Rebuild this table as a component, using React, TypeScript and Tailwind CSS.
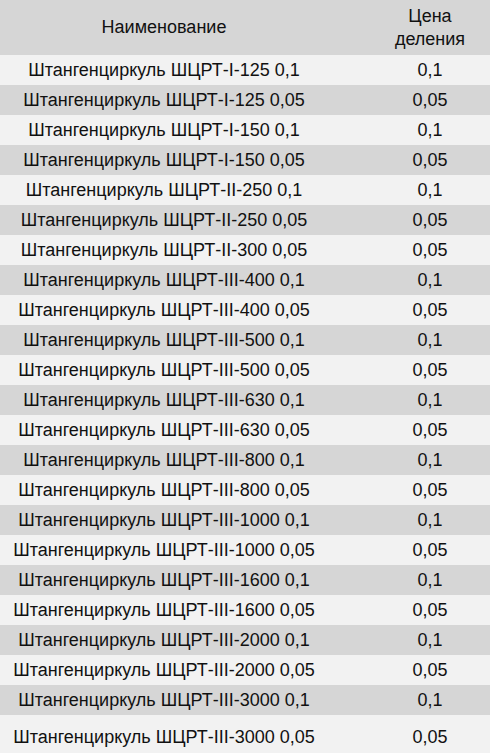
import React from "react";

const rows: [string, string][] = [
  ["Штангенциркуль ШЦРТ-I-125 0,1", "0,1"],
  ["Штангенциркуль ШЦРТ-I-125 0,05", "0,05"],
  ["Штангенциркуль ШЦРТ-I-150 0,1", "0,1"],
  ["Штангенциркуль ШЦРТ-I-150 0,05", "0,05"],
  ["Штангенциркуль ШЦРТ-II-250 0,1", "0,1"],
  ["Штангенциркуль ШЦРТ-II-250 0,05", "0,05"],
  ["Штангенциркуль ШЦРТ-II-300 0,05", "0,05"],
  ["Штангенциркуль ШЦРТ-III-400 0,1", "0,1"],
  ["Штангенциркуль ШЦРТ-III-400 0,05", "0,05"],
  ["Штангенциркуль ШЦРТ-III-500 0,1", "0,1"],
  ["Штангенциркуль ШЦРТ-III-500 0,05", "0,05"],
  ["Штангенциркуль ШЦРТ-III-630 0,1", "0,1"],
  ["Штангенциркуль ШЦРТ-III-630 0,05", "0,05"],
  ["Штангенциркуль ШЦРТ-III-800 0,1", "0,1"],
  ["Штангенциркуль ШЦРТ-III-800 0,05", "0,05"],
  ["Штангенциркуль ШЦРТ-III-1000 0,1", "0,1"],
  ["Штангенциркуль ШЦРТ-III-1000 0,05", "0,05"],
  ["Штангенциркуль ШЦРТ-III-1600 0,1", "0,1"],
  ["Штангенциркуль ШЦРТ-III-1600 0,05", "0,05"],
  ["Штангенциркуль ШЦРТ-III-2000 0,1", "0,1"],
  ["Штангенциркуль ШЦРТ-III-2000 0,05", "0,05"],
  ["Штангенциркуль ШЦРТ-III-3000 0,1", "0,1"],
  ["Штангенциркуль ШЦРТ-III-3000 0,05", "0,05"],
];

export default function App() {
  return (
    <div
      className="w-[490px] h-[753px] overflow-hidden bg-[#f2f2f2] text-[18px] text-[#111111]"
      style={{ fontFamily: '"Liberation Sans", Arial, sans-serif' }}
    >
      <div className="flex h-[55px] bg-[#d6d6d6] leading-[23px]">
        <div className="w-[328px] flex items-center justify-center">Наименование</div>
        <div className="w-[162px] pl-[42px] flex items-center justify-center text-center">
          Цена
          <br />
          деления
        </div>
      </div>
      {rows.map(([name, val], i) => {
        const last = i === rows.length - 1;
        return (
          <div
            key={i}
            className={`flex ${last ? "h-[44px]" : "h-[30px]"} ${
              i % 2 === 0 ? "bg-[#f2f2f2]" : "bg-[#d6d6d6]"
            }`}
          >
            <div className="w-[328px] flex items-center justify-center">{name}</div>
            <div className="w-[162px] pl-[42px] flex items-center justify-center">{val}</div>
          </div>
        );
      })}
    </div>
  );
}
